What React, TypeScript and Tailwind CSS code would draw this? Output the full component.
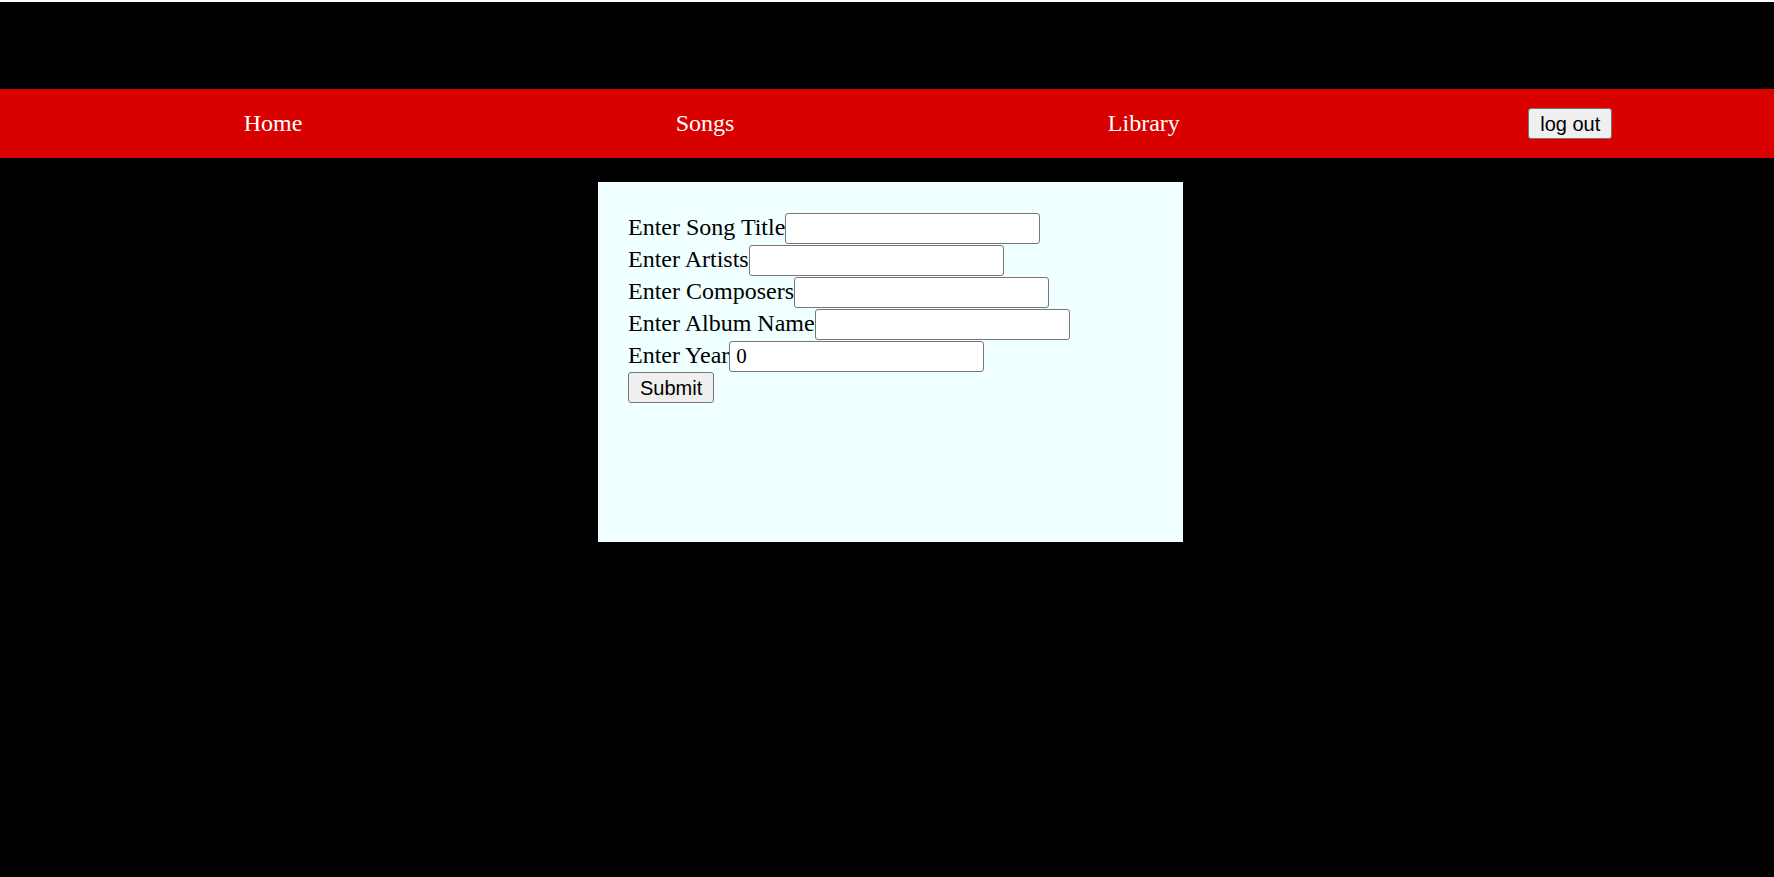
const fields=[
{label:"Enter Song Title",value:""},
{label:"Enter Artists",value:""},
{label:"Enter Composers",value:""},
{label:"Enter Album Name",value:""},
{label:"Enter Year",value:"0"}
];

const links=["Home","Songs","Library"];

export default function App(){

return(

<div className="min-h-[877px] bg-black border-t-2 border-white font-['Liberation_Serif',serif]">

<div className="h-[87px]"/>

<nav className="h-[69px] bg-[#d90000] flex items-center justify-around pl-[57px]">

{links.map(link=>(
<a key={link} href="#" className="px-[25px] pb-[2px] text-white text-[24px]">
{link}
</a>
))}

<button className="h-[31px] px-[11px] bg-[#efefef] border border-[#767676] rounded-[3px] text-black text-[20px] leading-none font-['Liberation_Sans',Arial,sans-serif]">
log out
</button>

</nav>

<main className="pt-[24px]">

<form className="ml-[598px] w-[585px] h-[360px] bg-[#f0ffff] pt-[30px] pl-[30px]">

{fields.map(field=>(
<div key={field.label} className="flex items-center h-[32px]">
<label className="text-[24px] leading-[30px] pb-[2px] text-black">
{field.label}
</label>
<input
type="text"
defaultValue={field.value}
className="w-[255px] h-[31px] pl-[6px] pt-[2px] bg-white border border-[#767676] rounded-[3px] text-[21px] text-black font-['Liberation_Serif',serif] outline-none"
/>
</div>
))}

<button type="button" className="h-[31px] px-[11px] bg-[#efefef] border border-[#767676] rounded-[3px] text-black text-[20px] leading-none font-['Liberation_Sans',Arial,sans-serif]">
Submit
</button>

</form>

</main>

</div>

);

}
